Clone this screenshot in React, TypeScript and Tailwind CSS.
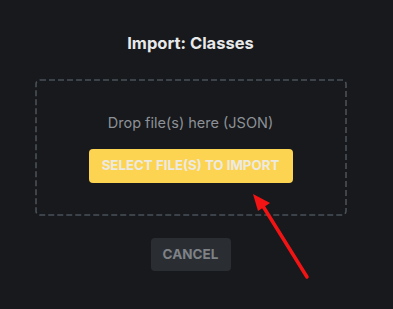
import React from 'react';

const App: React.FC = () => {
  return (
    <div
      className="relative h-[309px] w-[393px] overflow-hidden bg-[#17191c]"
      style={{ fontFamily: 'Inter, "Noto Sans", sans-serif' }}
    >
      <div className="flex w-[381px] flex-col items-center pt-[31px]">
        <h2 className="text-[16.5px] font-bold leading-[24px] text-[#e8e9ea]">Import: Classes</h2>

        <div className="relative mt-[24px] flex h-[137px] w-[312px] flex-col items-center pt-[33px]">
          {/* dashed drop zone outline */}
          <svg className="pointer-events-none absolute inset-0" width="312" height="137">
            <rect
              x="1"
              y="1"
              width="310"
              height="135"
              rx="4"
              fill="none"
              stroke="#4a5058"
              strokeWidth="1.6"
              strokeDasharray="6 3"
            />
          </svg>
          <p className="text-[14.5px] leading-[22px] text-[#8d9197]">Drop file(s) here (JSON)</p>
          <button className="mt-[15px] h-[34px] w-[204px] rounded-[4px] bg-[#fdd451] text-[13.3px] font-bold text-[#eceae3]">
            SELECT FILE(S) TO IMPORT
          </button>
        </div>

        <button className="mt-[22px] h-[33px] w-[80px] rounded-[4px] bg-[#2a2e33] text-[13.5px] font-bold text-[#7e8287]">
          CANCEL
        </button>
      </div>

      {/* annotation arrow */}
      <svg className="pointer-events-none absolute left-0 top-0" width="393" height="309">
        <line x1="307" y1="277" x2="261" y2="203" stroke="#f21414" strokeWidth="3.5" strokeLinecap="round" />
        <polygon points="253,194 270,203 258,211" fill="#f21414" />
      </svg>
    </div>
  );
};

export default App;
